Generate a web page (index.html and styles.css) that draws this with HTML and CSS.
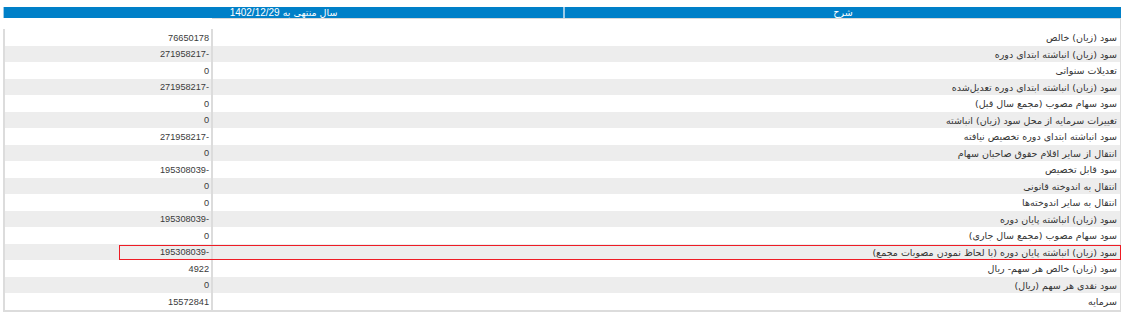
FILE: index.html
```html
<!DOCTYPE html>
<html lang="fa">
<head>
<meta charset="utf-8">
<title>گزارش</title>
<link rel="stylesheet" href="styles.css">
</head>
<body>
<div class="report" dir="rtl">
  <div class="head">
    <div class="hcell">شرح</div>
    <div class="hcell">سال منتهی به <span class="num">1402/12/29</span></div>
  </div>
  <div class="body">
    <div class="spacer"></div>
    <div class="row"><div class="desc">سود (زیان) خالص</div><div class="val">76650178</div></div>
    <div class="row"><div class="desc">سود (زیان) انباشته ابتدای دوره</div><div class="val">-271958217</div></div>
    <div class="row"><div class="desc">تعدیلات سنواتی</div><div class="val">0</div></div>
    <div class="row"><div class="desc">سود (زیان) انباشته ابتدای دوره تعدیل‌شده</div><div class="val">-271958217</div></div>
    <div class="row"><div class="desc">سود سهام مصوب (مجمع سال قبل)</div><div class="val">0</div></div>
    <div class="row"><div class="desc">تغییرات سرمایه از محل سود (زیان) انباشته</div><div class="val">0</div></div>
    <div class="row"><div class="desc">سود انباشته ابتدای دوره تخصیص نیافته</div><div class="val">-271958217</div></div>
    <div class="row"><div class="desc">انتقال از سایر اقلام حقوق صاحبان سهام</div><div class="val">0</div></div>
    <div class="row"><div class="desc">سود قابل تخصیص</div><div class="val">-195308039</div></div>
    <div class="row"><div class="desc">انتقال به اندوخته قانونی</div><div class="val">0</div></div>
    <div class="row"><div class="desc">انتقال به سایر اندوخته‌ها</div><div class="val">0</div></div>
    <div class="row"><div class="desc">سود (زیان) انباشته پایان دوره</div><div class="val">-195308039</div></div>
    <div class="row"><div class="desc">سود سهام مصوب (مجمع سال جاری)</div><div class="val">0</div></div>
    <div class="row marked"><div class="desc">سود (زیان) انباشته پایان دوره (با لحاظ نمودن مصوبات مجمع)</div><div class="val">-195308039</div><span class="marker"></span></div>
    <div class="row"><div class="desc">سود (زیان) خالص هر سهم- ریال</div><div class="val">4922</div></div>
    <div class="row"><div class="desc">سود نقدی هر سهم (ریال)</div><div class="val">0</div></div>
    <div class="row last"><div class="desc">سرمایه</div><div class="val">15572841</div></div>
  </div>
</div>
</body>
</html>
```
FILE: styles.css
```css
html, body {
  margin: 0;
  padding: 0;
  background: #ffffff;
}

body {
  font-family: "DejaVu Sans", "Liberation Sans", sans-serif;
  font-size: 9.5px;
  color: #333333;
}

.report {
  width: 1118px;
  margin: 7px 0 0 3px;
}

.head {
  display: grid;
  grid-template-columns: 557px 559px;
  column-gap: 1px;
  height: 11px;
  background: #9ccbe8;
  border-left: 1px solid #9ccbe8;
}

.hcell {
  background: #0080c8;
  color: #ffffff;
  text-align: center;
  line-height: 11px;
  font-size: 9.5px;
}

.hcell:first-child {
  margin-left: 1px;
}

.num {
  font-family: "Liberation Sans", sans-serif;
  font-size: 10px;
}

.body {
  display: flex;
  flex-direction: column;
}

.spacer {
  height: 10px;
  margin-left: 209px;
  border-top: 1px solid #d9d9d9;
  border-right: 1px solid #d9d9d9;
}

.row {
  position: relative;
  display: grid;
  grid-template-columns: 1fr 208px;
  height: 16px;
  align-items: center;
  border-left: 2px solid #dcdcdc;
  border-right: 1px solid #dcdcdc;
  background: #ffffff;
}

.row:nth-child(even) {
  height: 17px;
}

.row:nth-child(odd) {
  background: #ededed;
}

.row.last {
  border-bottom: 2px solid #dcdcdc;
}

.desc {
  padding-right: 3px;
  text-align: right;
  white-space: nowrap;
}

.val {
  height: 100%;
  display: flex;
  align-items: center;
  padding-right: 2px;
  border-right: 2px solid #dcdcdc;
  white-space: nowrap;
  font-family: "Liberation Sans", sans-serif;
  font-size: 9.2px;
  color: #3a3a3a;
}

.marker {
  position: absolute;
  top: 1px;
  left: 114px;
  width: 1002px;
  height: 15px;
  box-shadow: inset 0 0 0 1px #ee1c25;
  pointer-events: none;
}
```
